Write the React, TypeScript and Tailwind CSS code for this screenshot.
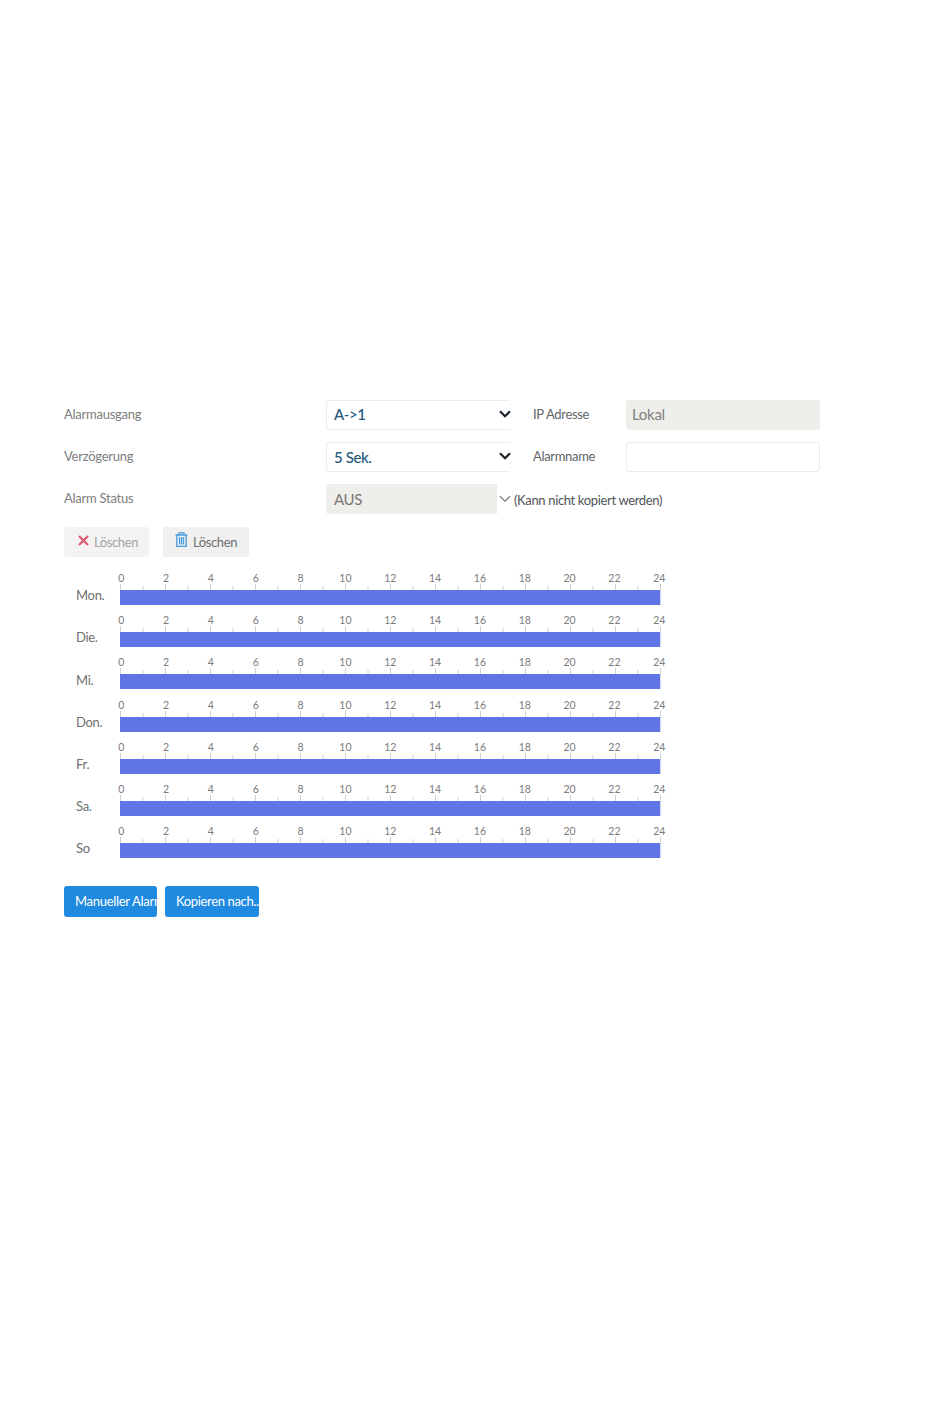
const days = ["Mon.", "Die.", "Mi.", "Don.", "Fr.", "Sa.", "So"];
const hours = Array.from({ length: 25 }, (_, i) => i);

function Ruler() {
  return (
    <svg width="560" height="20" viewBox="0 0 560 20" className="block overflow-visible" style={{ fontFamily: "Lato, sans-serif" }}>
      {hours.map((h) => (
        <line
          key={h}
          x1={h * 22.5 + 0.5}
          x2={h * 22.5 + 0.5}
          y1={h % 2 === 0 ? 14 : 16}
          y2={20}
          stroke="#d0d0d0"
          strokeWidth="1"
        />
      ))}
      {hours
        .filter((h) => h % 2 === 0)
        .map((h) => (
          <text key={h} x={h * 22.42 + 1.2} y={12} textAnchor="middle" fontSize="10.5" fill="#7c7c7c">
            {h}
          </text>
        ))}
    </svg>
  );
}

function Select({ value, disabled }: { value: string; disabled?: boolean }) {
  return (
    <div className="relative h-[30px] w-[184px] shrink-0">
      <div
        className={
          disabled
            ? "flex h-full w-[171px] items-center rounded-l-[3px] bg-[#eeeeea] pl-2 text-[15px] tracking-[-0.3px] text-[#777777]"
            : "flex h-full w-full items-center rounded-l-[3px] border-y border-l border-[#ebebeb] pl-[7px] text-[15px] font-medium tracking-[-0.4px] text-[#23587c]"
        }
      >
        <span className={value === "A->1" ? "-mt-[2px]" : ""}>{value}</span>
      </div>
      <svg
        width="12"
        height="8"
        viewBox="0 0 12 8"
        fill="none"
        className={disabled ? "absolute -right-[1px] top-[11px]" : "absolute -right-[1px] top-[10px]"}
        stroke={disabled ? "#8a8f94" : "#1d2630"}
        strokeWidth={disabled ? 1.6 : 2.3}
      >
        <path d="M1 1.3 L6 6.2 L11 1.3" />
      </svg>
    </div>
  );
}

function Label({ children }: { children: string }) {
  return <div className="w-[262px] shrink-0 text-[13px] tracking-[-0.25px] text-[#7d7d7d]">{children}</div>;
}

function SideLabel({ children }: { children: string }) {
  return <div className="ml-[23px] w-[93px] shrink-0 text-[13px] tracking-[-0.33px] text-[#5f6468]">{children}</div>;
}

export default function App() {
  return (
    <div
      className="min-h-[1409px] w-[950px] bg-white pl-[64px] pt-[400px]"
      style={{ fontFamily: "Lato, 'Liberation Sans', sans-serif" }}
    >
      <div className="flex flex-col gap-[12px]">
        <div className="flex items-center">
          <Label>Alarmausgang</Label>
          <Select value="A->1" />
          <SideLabel>IP Adresse</SideLabel>
          <div className="flex h-[30px] w-[194px] items-center rounded-[3px] bg-[#eeeeea] pb-[2px] pl-[6px] text-[15px] tracking-[-0.3px] text-[#808080]">
            Lokal
          </div>
        </div>
        <div className="flex items-center">
          <Label>Verzögerung</Label>
          <Select value="5 Sek." />
          <SideLabel>Alarmname</SideLabel>
          <div className="h-[30px] w-[194px] rounded-[3px] border border-[#ebebeb]" />
        </div>
        <div className="flex items-center">
          <Label>Alarm Status</Label>
          <Select value="AUS" disabled />
          <div className="ml-[4px] mt-[4px] text-[13px] tracking-[-0.35px] text-[#4f5458]">(Kann nicht kopiert werden)</div>
        </div>
      </div>

      <div className="mt-[13px] flex gap-[14px]">
        <div className="flex h-[30px] w-[85px] items-center rounded-[3px] bg-[#f3f3f3] pl-[14px] pt-[1px] text-[13px] tracking-[-0.4px] text-[#a3a3a3]">
          <svg width="11" height="11" viewBox="0 0 11 11" className="mb-[5px] mr-[5px]" stroke="#e25d70" strokeWidth="2.4">
            <path d="M1 1 L10 10 M10 1 L1 10" />
          </svg>
          Löschen
        </div>
        <div className="flex h-[30px] w-[86px] items-center rounded-[3px] bg-[#f0f0f0] pl-[12px] pt-[1px] text-[13px] tracking-[-0.4px] text-[#6e6e6e]">
          <svg width="13" height="15" viewBox="0 0 13 15" fill="none" className="mb-[6px] mr-[5px]" stroke="#4a9ade" strokeWidth="1.3">
            <path d="M0.5 3 H12.5 M4 3 V0.8 H9 V3 M1.8 3 V14.3 H11.2 V3 M4.5 5 V12.5 M6.5 5 V12.5 M8.5 5 V12.5" />
          </svg>
          Löschen
        </div>
      </div>

      <div className="mt-[13px]">
        {days.map((d) => (
          <div key={d} className="flex h-[42.2px]">
            <div className="w-[56px] shrink-0 pl-[12px] pt-[17.2px] text-[13px] leading-[16px] tracking-[-0.3px] text-[#707070]">{d}</div>
            <div>
              <Ruler />
              <div className="h-[15px] w-[541px] border-r border-[#d5d9ee] bg-[#5f75e6]" />
            </div>
          </div>
        ))}
      </div>

      <div className="mt-[21px] flex gap-[8px]">
        <div className="flex h-[31px] w-[93px] items-center overflow-hidden whitespace-nowrap rounded-[3px] bg-[#1f8ae0] pl-[11px] text-[13px] tracking-[-0.3px] text-white">
          Manueller Alarm
        </div>
        <div className="flex h-[31px] w-[94px] items-center overflow-hidden whitespace-nowrap rounded-[3px] bg-[#1f8ae0] pl-[11px] text-[13px] tracking-[-0.35px] text-white">
          Kopieren nach...
        </div>
      </div>
    </div>
  );
}
